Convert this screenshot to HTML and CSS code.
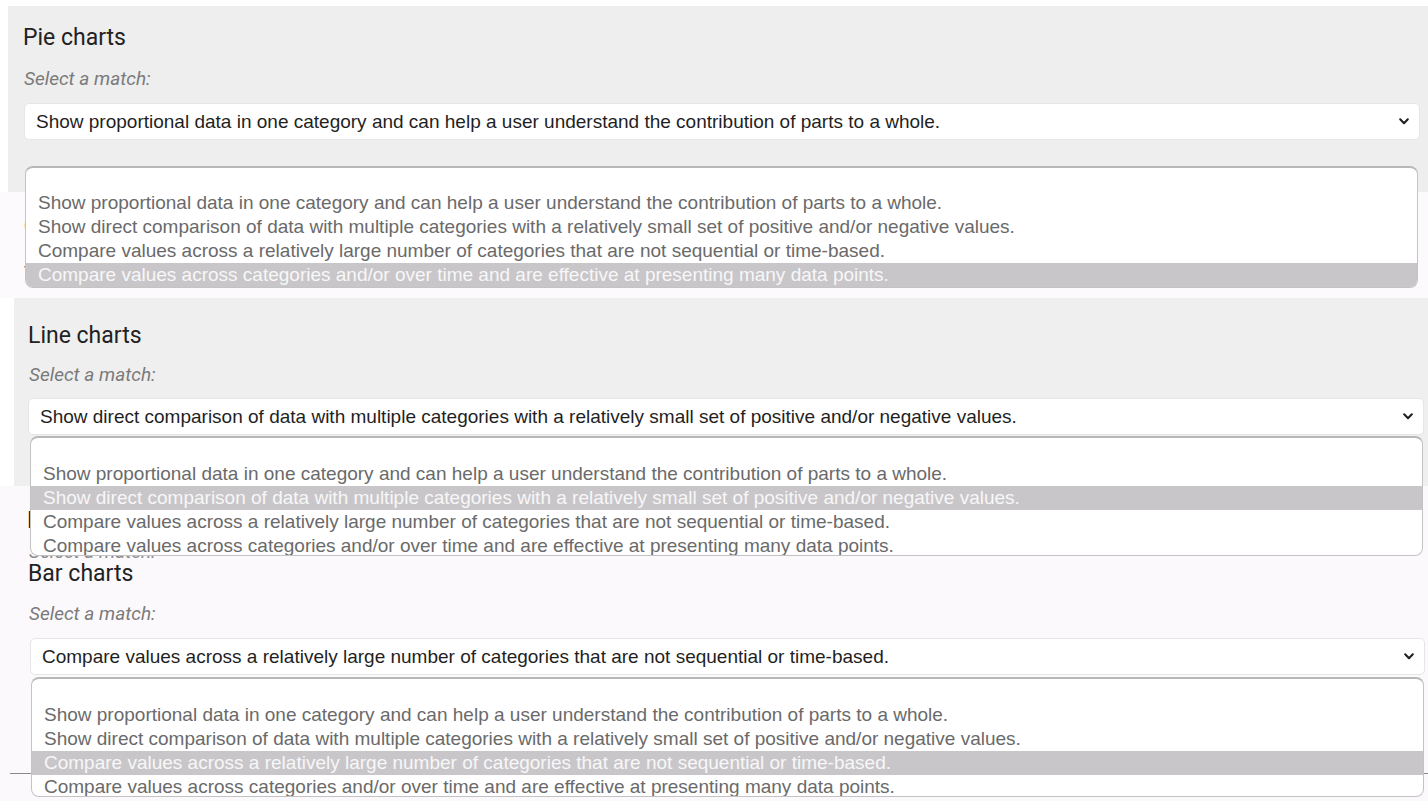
FILE: index.html
```html
<!DOCTYPE html>
<html lang="en">
<head>
<meta charset="utf-8">
<title>Chart matching</title>
<link rel="stylesheet" href="styles.css">
</head>
<body>
<div class="page">
  <section class="panel panel-pie">
    <h2 class="title">Pie charts</h2>
    <p class="label">Select a match:</p>
    <div class="field">
      <div class="select">
        <span class="select-text">Show proportional data in one category and can help a user understand the contribution of parts to a whole.</span>
        <svg class="chev" width="10" height="7" viewBox="0 0 10 7"><path d="M1.2 1.2 L5 5.2 L8.8 1.2" fill="none" stroke="#1e1e1e" stroke-width="2" stroke-linecap="round" stroke-linejoin="round"/></svg>
      </div>
      <ul class="listbox listbox-pie">
        <li class="opt">Show proportional data in one category and can help a user understand the contribution of parts to a whole.</li>
        <li class="opt">Show direct comparison of data with multiple categories with a relatively small set of positive and/or negative values.</li>
        <li class="opt">Compare values across a relatively large number of categories that are not sequential or time-based.</li>
        <li class="opt sel">Compare values across categories and/or over time and are effective at presenting many data points.</li>
      </ul>
    </div>
  </section>

  <div class="gap">
    <p class="ghost ghost-a">Column charts</p>
    <p class="ghost ghost-b">To</p>
  </div>

  <section class="panel panel-line">
    <h2 class="title">Line charts</h2>
    <p class="label">Select a match:</p>
    <div class="field">
      <div class="select">
        <span class="select-text">Show direct comparison of data with multiple categories with a relatively small set of positive and/or negative values.</span>
        <svg class="chev" width="10" height="7" viewBox="0 0 10 7"><path d="M1.2 1.2 L5 5.2 L8.8 1.2" fill="none" stroke="#1e1e1e" stroke-width="2" stroke-linecap="round" stroke-linejoin="round"/></svg>
      </div>
      <ul class="listbox listbox-line">
        <li class="opt">Show proportional data in one category and can help a user understand the contribution of parts to a whole.</li>
        <li class="opt sel">Show direct comparison of data with multiple categories with a relatively small set of positive and/or negative values.</li>
        <li class="opt">Compare values across a relatively large number of categories that are not sequential or time-based.</li>
        <li class="opt">Compare values across categories and/or over time and are effective at presenting many data points.</li>
      </ul>
    </div>
  </section>

  <section class="panel panel-bar">
    <p class="ghost ghost-title">Bar charts</p>
    <p class="ghost ghost-label">Select a match:</p>
    <h2 class="title">Bar charts</h2>
    <p class="label">Select a match:</p>
    <div class="field">
      <div class="select">
        <span class="select-text">Compare values across a relatively large number of categories that are not sequential or time-based.</span>
        <svg class="chev" width="10" height="7" viewBox="0 0 10 7"><path d="M1.2 1.2 L5 5.2 L8.8 1.2" fill="none" stroke="#1e1e1e" stroke-width="2" stroke-linecap="round" stroke-linejoin="round"/></svg>
      </div>
      <ul class="listbox listbox-bar">
        <li class="opt">Show proportional data in one category and can help a user understand the contribution of parts to a whole.</li>
        <li class="opt">Show direct comparison of data with multiple categories with a relatively small set of positive and/or negative values.</li>
        <li class="opt sel">Compare values across a relatively large number of categories that are not sequential or time-based.</li>
        <li class="opt">Compare values across categories and/or over time and are effective at presenting many data points.</li>
      </ul>
    </div>
    <div class="rule"></div>
  </section>
</div>
</body>
</html>
```

FILE: styles.css
```css
* { box-sizing: border-box; }

html, body {
  margin: 0;
  padding: 0;
  background: #ffffff;
}

body {
  font-family: "Liberation Sans", Arial, sans-serif;
  overflow: hidden;
}

.page {
  padding-top: 6px;
  width: 1428px;
}

.panel {
  display: flex;
  flex-direction: column;
}

.title {
  margin: 0 0 0 -1px;
  font-family: Roboto, "Noto Sans", sans-serif;
  font-weight: 400;
  font-size: 23px;
  line-height: 27px;
  color: #222222;
}

.label {
  margin: 0;
  font-family: Roboto, "Noto Sans", sans-serif;
  font-style: italic;
  font-size: 19px;
  line-height: 22px;
  color: #7a7a7a;
}

.field {
  position: relative;
}

.select {
  height: 37px;
  background: #ffffff;
  border: 1px solid #e6e6e6;
  border-radius: 5px;
  display: flex;
  align-items: center;
  justify-content: space-between;
  padding: 0 10px 0 11px;
}

.select-text {
  font-family: "Liberation Sans", Arial, sans-serif;
  font-size: 19px;
  line-height: 22px;
  color: #1f1f1f;
  white-space: nowrap;
}

.chev {
  display: block;
  flex: none;
}

.listbox {
  position: absolute;
  z-index: 5;
  margin: 0;
  padding: 24px 0 0 0;
  list-style: none;
  width: 1393px;
  background: #ffffff;
  border: 1px solid #c3c3c3;
  border-top: 2px solid #b8b8b8;
  border-radius: 8px;
  overflow: hidden;
}

.opt {
  height: 24px;
  padding-left: 12px;
  font-family: "Liberation Sans", Arial, sans-serif;
  font-size: 19px;
  line-height: 24px;
  color: #6a6a6a;
  white-space: nowrap;
}

.opt.sel {
  background: #c9c6ca;
  color: #f7f7f7;
}

/* Pie panel */
.panel-pie {
  margin-left: 8px;
  height: 186px;
  padding: 18px 8px 0 16px;
  background: #eeeeee;
}

.panel-pie .label { margin-top: 17px; }
.panel-pie .field { margin-top: 13px; }

.listbox-pie {
  top: 63px;
  left: 1px;
  height: 122px;
  padding-top: 23px;
}

/* gap between the first and second panel */
.gap {
  height: 106px;
  background: #fcfafc;
  padding-top: 23px;
}

.ghost {
  margin: 0;
  white-space: nowrap;
}

.ghost-a {
  margin-left: 24px;
  font-family: "Liberation Sans", Arial, sans-serif;
  font-size: 18px;
  line-height: 22px;
  color: #333333;
}

.ghost-b {
  margin-left: 24px;
  margin-top: 25px;
  font-family: "Liberation Sans", Arial, sans-serif;
  font-size: 18px;
  line-height: 22px;
  color: #555555;
}

/* Line panel */
.panel-line {
  margin-left: 14px;
  height: 188px;
  padding: 24px 4px 0 15px;
  background: #efefef;
}

.panel-line .label { margin-top: 15px; }
.panel-line .field { margin-top: 12px; margin-left: -1px; }

.listbox-line {
  top: 38px;
  left: 2px;
  height: 120px;
}

/* Bar panel */
.panel-bar {
  min-height: 315px;
  padding: 21px 3px 0 29px;
  background: #fcf9fc;
}

.ghost-title {
  margin-left: -2px;
  font-family: Roboto, "Noto Sans", sans-serif;
  font-size: 23px;
  line-height: 27px;
  color: #222222;
}

.ghost-label {
  margin-top: 7px;
  font-family: Roboto, "Noto Sans", sans-serif;
  font-style: italic;
  font-size: 19px;
  line-height: 22px;
  color: #8a8a8a;
}

.panel-bar .title { margin-top: -3px; }
.panel-bar .label { margin-top: 16px; }
.panel-bar .field { margin-top: 13px; margin-left: 1px; }

.listbox-bar {
  top: 39px;
  left: 1px;
  height: 120px;
}

.rule {
  margin: 98px -3px 0 -19px;
  height: 1px;
  background: #8a8a8a;
}
```
